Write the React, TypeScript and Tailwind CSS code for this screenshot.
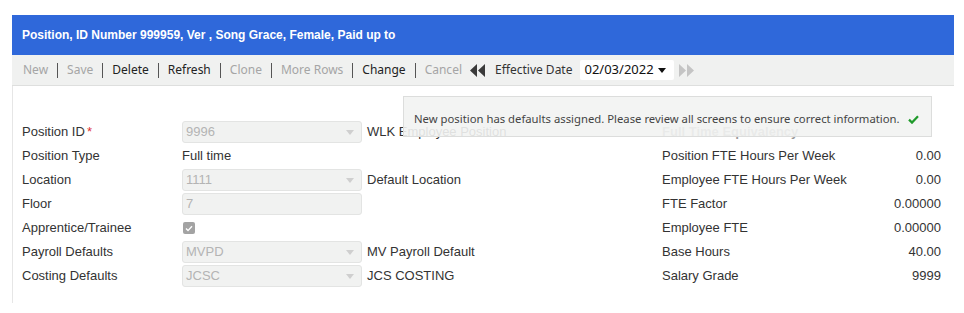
import React from 'react';

// ── Data ──────────────────────────────────────────────────────────────────────

const TOOLBAR: { label: string; enabled: boolean }[] = [
  { label: 'New', enabled: false },
  { label: 'Save', enabled: false },
  { label: 'Delete', enabled: true },
  { label: 'Refresh', enabled: true },
  { label: 'Clone', enabled: false },
  { label: 'More Rows', enabled: false },
  { label: 'Change', enabled: true },
  { label: 'Cancel', enabled: false },
];

type Field =
  | { label: string; kind: 'select'; value: string; desc?: string; required?: boolean }
  | { label: string; kind: 'text'; value: string }
  | { label: string; kind: 'input'; value: string }
  | { label: string; kind: 'check' };

const FIELDS: Field[] = [
  { label: 'Position ID', kind: 'select', value: '9996', desc: 'WLK Employee Position', required: true },
  { label: 'Position Type', kind: 'text', value: 'Full time' },
  { label: 'Location', kind: 'select', value: '1111', desc: 'Default Location' },
  { label: 'Floor', kind: 'input', value: '7' },
  { label: 'Apprentice/Trainee', kind: 'check' },
  { label: 'Payroll Defaults', kind: 'select', value: 'MVPD', desc: 'MV Payroll Default' },
  { label: 'Costing Defaults', kind: 'select', value: 'JCSC', desc: 'JCS COSTING' },
];

const FTE: [string, string][] = [
  ['Position FTE Hours Per Week', '0.00'],
  ['Employee FTE Hours Per Week', '0.00'],
  ['FTE Factor', '0.00000'],
  ['Employee FTE', '0.00000'],
  ['Base Hours', '40.00'],
  ['Salary Grade', '9999'],
];

const ui = { fontFamily: '"Noto Sans", "Open Sans", sans-serif' };
const arial = { fontFamily: '"Liberation Sans", Arial, sans-serif' };

// ── Small pieces ──────────────────────────────────────────────────────────────

function Caret({ className }: { className: string }) {
  return (
    <svg width="8" height="5" viewBox="0 0 8 5" className={className}>
      <path d="M0 0h8L4 5z" fill="currentColor" />
    </svg>
  );
}

function DoubleArrow({ dir, color }: { dir: 'left' | 'right'; color: string }) {
  return (
    <svg width="15" height="13" viewBox="0 0 15 13" className={color}>
      {dir === 'left' ? (
        <path d="M7 0v13L0 6.5zM15 0v13L8 6.5z" fill="currentColor" />
      ) : (
        <path d="M0 0v13l7-6.5zM8 0v13l7-6.5z" fill="currentColor" />
      )}
    </svg>
  );
}

function FieldControl({ field }: { field: Field }) {
  if (field.kind === 'text') {
    return <span className="text-[#333]">{field.value}</span>;
  }
  if (field.kind === 'check') {
    return (
      <span className="ml-px flex h-[12px] w-[12px] items-center justify-center rounded-[2px] bg-[#a3a3a3]">
        <svg width="8" height="7" viewBox="0 0 8 7">
          <path d="M1 3.6l2 2L7 1.2" stroke="#fff" strokeWidth="1.4" fill="none" />
        </svg>
      </span>
    );
  }
  return (
    <div className="flex h-[22px] w-[180px] items-center justify-between rounded-[3px] border border-[#e3e4e3] bg-[#f1f2f1] pl-[3px] pr-[7px] text-[#b4b4b4]">
      <span>{field.value}</span>
      {field.kind === 'select' && <Caret className="text-[#cfcfcf]" />}
    </div>
  );
}

// ── App ───────────────────────────────────────────────────────────────────────

export default function App() {
  return (
    <div className="h-[313px] w-[964px] bg-white pl-[12px] pr-[10px] pt-[15px]">
      {/* Title bar */}
      <div
        className="flex h-[40px] items-center bg-[#2f68da] pl-[10px] text-[12px] font-bold text-white"
        style={arial}
      >
        Position, ID Number 999959, Ver , Song Grace, Female, Paid up to
      </div>

      {/* Toolbar */}
      <div
        className="flex h-[31px] items-center border-b border-[#dedfde] bg-[#f0f1f0] pl-[11px] text-[12px]"
        style={ui}
      >
        {TOOLBAR.map((b, i) => (
          <React.Fragment key={b.label}>
            {i > 0 && <span className="mx-[9px] h-[15px] w-px bg-[#555]" />}
            <span className={b.enabled ? 'text-[#222]' : 'text-[#a5a5a5]'}>{b.label}</span>
          </React.Fragment>
        ))}
        <span className="ml-[8px]">
          <DoubleArrow dir="left" color="text-[#3a3a3a]" />
        </span>
        <span className="ml-[10px] text-[#333]">Effective Date</span>
        <div className="ml-[8px] flex h-[20px] w-[94px] items-center justify-between rounded-[2px] bg-white pl-[4px] pr-[8px] text-[13px] text-[#111]">
          <span>02/03/2022</span>
          <Caret className="text-[#111]" />
        </div>
        <span className="ml-[5px]">
          <DoubleArrow dir="right" color="text-[#c4c4c4]" />
        </span>
      </div>

      {/* Body */}
      <div className="relative h-[217px] border-l border-[#e6e6e6]" style={arial}>
        <div className="flex pt-[34px] text-[13px] text-[#333]">
          {/* Left form */}
          <div className="flex flex-col">
            {FIELDS.map((f) => (
              <div key={f.label} className="flex h-[24px] items-center">
                <span className="w-[169px] pl-[9px]">
                  {f.label}
                  {f.kind === 'select' && f.required && <span className="ml-[2px] text-[#d33]">*</span>}
                </span>
                <FieldControl field={f} />
                {f.kind === 'select' && f.desc && <span className="ml-[5px]">{f.desc}</span>}
              </div>
            ))}
          </div>

          {/* FTE column */}
          <div className="ml-auto mr-[13px] flex w-[279px] flex-col">
            <div className="flex h-[24px] items-center font-bold text-[#9a9a9a]">Full Time Equivalency</div>
            {FTE.map(([label, value]) => (
              <div key={label} className="flex h-[24px] items-center justify-between">
                <span>{label}</span>
                <span>{value}</span>
              </div>
            ))}
          </div>
        </div>

        {/* Notification toast */}
        <div
          className="absolute left-[390px] top-[10px] flex h-[41px] w-[529px] items-center justify-between border border-[#dcdddc] bg-[#f2f3f2]/90 pl-[10px] pr-[12px] pt-[6px] text-[11.3px] text-[#444]"
          style={ui}
        >
          <span className="whitespace-nowrap">
            New position has defaults assigned. Please review all screens to ensure correct information.
          </span>
          <svg width="11" height="9" viewBox="0 0 11 9">
            <path d="M1 4.6l3 3L10 1.2" stroke="#1f9a2a" strokeWidth="2.2" fill="none" />
          </svg>
        </div>
      </div>
    </div>
  );
}
